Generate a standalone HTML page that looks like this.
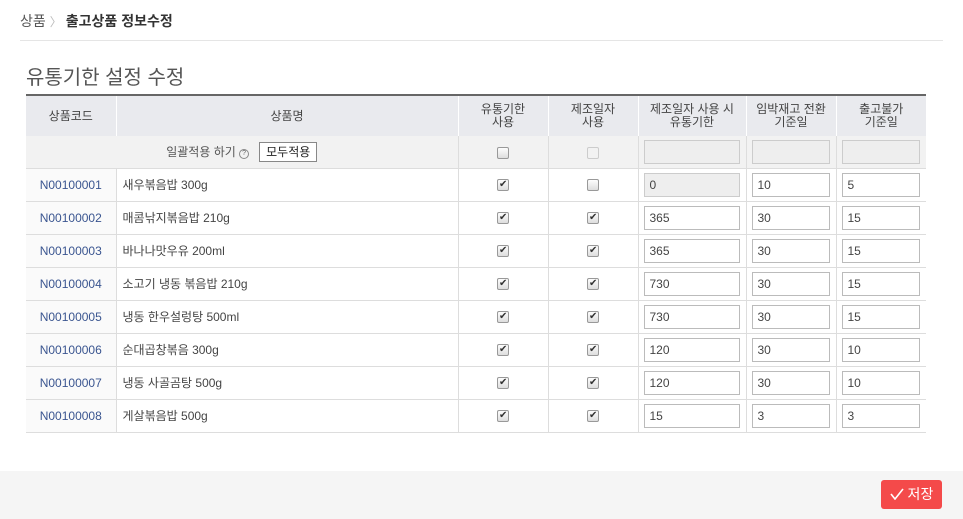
<!DOCTYPE html>
<html><head><meta charset="utf-8"><style>
*{box-sizing:border-box;margin:0;padding:0}
body{width:963px;height:519px;background:#fff;font-family:"Liberation Sans","Noto Sans CJK KR",sans-serif;font-size:12px;color:#444;position:relative;overflow:hidden}
.bc{position:absolute;left:20px;top:11px;font-size:14px;color:#555}
.bc b{font-weight:bold;color:#333}
.bc .sep{color:#bbb;margin:0 4px;font-size:12px}
.hr{position:absolute;left:20px;right:20px;top:40px;border-top:1px solid #e5e5e5}
h1{position:absolute;left:26px;top:61px;font-size:20px;font-weight:normal;color:#555}
table{position:absolute;left:26px;top:94px;width:900px;border-collapse:collapse;table-layout:fixed}
th{background:#e9eaee;font-weight:normal;height:41px;border-top:2px solid #666;border-left:1px solid #fff;font-size:12px;line-height:13px;color:#444}
td{border-bottom:1px solid #ddd;border-left:1px solid #ddd;height:33px;text-align:center}
td:first-child,th:first-child{border-left:none}
tr.bulk td{background:#f2f2f2;height:32px}
td.code{color:#3a5590;background:#fafafa}
td.name{text-align:left;padding-left:6px;color:#444}
td.in{text-align:left;padding-left:5px}
.inp{display:inline-block;height:24px;border:1px solid #bbb;padding-left:5px;line-height:22px;font-size:12px;color:#444;background:#fff;vertical-align:middle}
.inp.d{background:#eee;border-color:#ccc}
.cb{display:inline-block;width:12px;height:12px;border:1px solid #999;border-radius:2px;background:linear-gradient(#fdfdfd,#ddd);vertical-align:middle;position:relative;font-size:10px;line-height:10px;color:#333}
.cb.ck::after{content:"✔";position:absolute;left:1px;top:0}
.cb.dis{border-color:#ccc;background:#f2f2f2}
.btn{display:inline-block;border:1px solid #888;background:#fff;padding:0 6px;height:20px;line-height:18px;margin-left:10px;color:#222}
.q{display:inline-block;width:10px;height:10px;border:1px solid #888;border-radius:50%;font-size:7px;line-height:8px;text-align:center;color:#666;vertical-align:1px}
.foot{position:absolute;left:0;top:471px;width:963px;height:48px;background:#f5f5f5}
.save{position:absolute;left:881px;top:480px;width:61px;height:29px;background:#f44a4a;border-radius:3px;color:#fff;font-size:14px;line-height:29px;text-align:center}
</style></head><body>
<div class="bc">상품<span class="sep">〉</span><b>출고상품 정보수정</b></div>
<div class="hr"></div>
<h1>유통기한 설정 수정</h1>
<table>
<colgroup><col style="width:90px"><col style="width:342px"><col style="width:90px"><col style="width:90px"><col style="width:108px"><col style="width:90px"><col style="width:90px"></colgroup>
<tr><th>상품코드</th><th>상품명</th><th>유통기한<br>사용</th><th>제조일자<br>사용</th><th>제조일자 사용 시<br>유통기한</th><th>임박재고 전환<br>기준일</th><th>출고불가<br>기준일</th></tr>
<tr class="bulk"><td colspan="2" style="color:#555">일괄적용 하기 <span class="q">?</span><span class="btn">모두적용</span></td><td><span class="cb"></span></td><td><span class="cb dis"></span></td><td class="in"><span class="inp d" style="width:96px"></span></td><td class="in"><span class="inp d" style="width:78px"></span></td><td class="in"><span class="inp d" style="width:78px"></span></td></tr>
<tr><td class="code">N00100001</td><td class="name">새우볶음밥 300g</td><td><span class="cb ck"></span></td><td><span class="cb"></span></td><td class="in"><span class="inp d" style="width:96px">0</span></td><td class="in"><span class="inp" style="width:78px">10</span></td><td class="in"><span class="inp" style="width:78px">5</span></td></tr>
<tr><td class="code">N00100002</td><td class="name">매콤낚지볶음밥 210g</td><td><span class="cb ck"></span></td><td><span class="cb ck"></span></td><td class="in"><span class="inp" style="width:96px">365</span></td><td class="in"><span class="inp" style="width:78px">30</span></td><td class="in"><span class="inp" style="width:78px">15</span></td></tr>
<tr><td class="code">N00100003</td><td class="name">바나나맛우유 200ml</td><td><span class="cb ck"></span></td><td><span class="cb ck"></span></td><td class="in"><span class="inp" style="width:96px">365</span></td><td class="in"><span class="inp" style="width:78px">30</span></td><td class="in"><span class="inp" style="width:78px">15</span></td></tr>
<tr><td class="code">N00100004</td><td class="name">소고기 냉동 볶음밥 210g</td><td><span class="cb ck"></span></td><td><span class="cb ck"></span></td><td class="in"><span class="inp" style="width:96px">730</span></td><td class="in"><span class="inp" style="width:78px">30</span></td><td class="in"><span class="inp" style="width:78px">15</span></td></tr>
<tr><td class="code">N00100005</td><td class="name">냉동 한우설렁탕 500ml</td><td><span class="cb ck"></span></td><td><span class="cb ck"></span></td><td class="in"><span class="inp" style="width:96px">730</span></td><td class="in"><span class="inp" style="width:78px">30</span></td><td class="in"><span class="inp" style="width:78px">15</span></td></tr>
<tr><td class="code">N00100006</td><td class="name">순대곱창볶음 300g</td><td><span class="cb ck"></span></td><td><span class="cb ck"></span></td><td class="in"><span class="inp" style="width:96px">120</span></td><td class="in"><span class="inp" style="width:78px">30</span></td><td class="in"><span class="inp" style="width:78px">10</span></td></tr>
<tr><td class="code">N00100007</td><td class="name">냉동 사골곰탕 500g</td><td><span class="cb ck"></span></td><td><span class="cb ck"></span></td><td class="in"><span class="inp" style="width:96px">120</span></td><td class="in"><span class="inp" style="width:78px">30</span></td><td class="in"><span class="inp" style="width:78px">10</span></td></tr>
<tr><td class="code">N00100008</td><td class="name">게살볶음밥 500g</td><td><span class="cb ck"></span></td><td><span class="cb ck"></span></td><td class="in"><span class="inp" style="width:96px">15</span></td><td class="in"><span class="inp" style="width:78px">3</span></td><td class="in"><span class="inp" style="width:78px">3</span></td></tr>
</table>
<div class="foot"></div>
<div class="save"><svg width="14" height="12" viewBox="0 0 14 12" style="vertical-align:-1px"><path d="M1 6 L5 11 L13 1" fill="none" stroke="#fff" stroke-width="1.6"/></svg> 저장</div>
</body></html>
